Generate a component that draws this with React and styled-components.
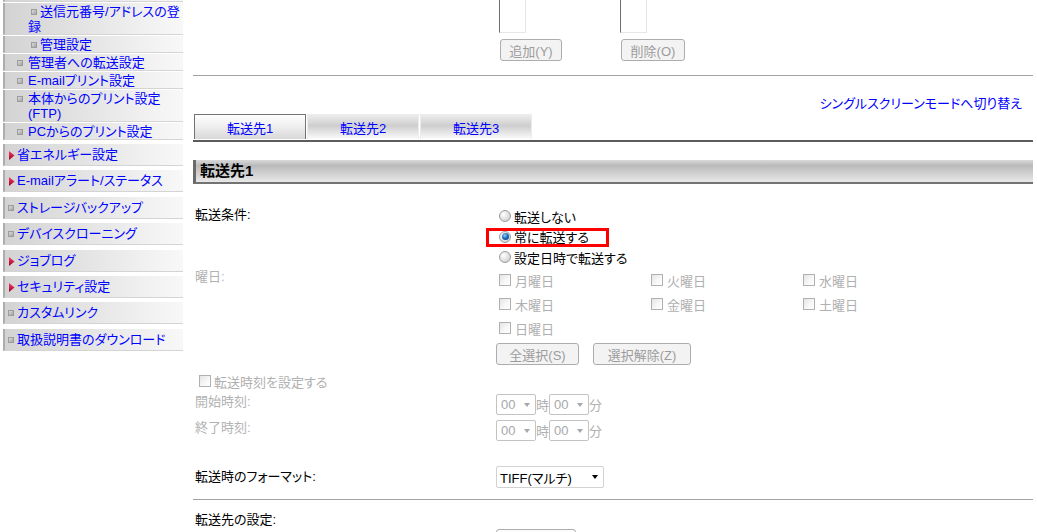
import React from 'react';
import styled, { createGlobalStyle, css } from 'styled-components';

const GlobalStyle = createGlobalStyle`
  html, body {
    margin: 0;
    padding: 0;
    overflow: hidden;
    background: #fff;
  }
  body {
    font-family: "Liberation Sans", "Noto Sans CJK JP", sans-serif;
    font-size: 13px;
    font-feature-settings: "palt";
    color: #000;
  }
  * {
    box-sizing: border-box;
  }
`;

const Page = styled.div`
  display: flex;
  align-items: flex-start;
  width: 1037px;
  height: 532px;
  overflow: hidden;
`;

/* ---------- side menu ---------- */

const Sidebar = styled.nav`
  flex: none;
  width: 183px;
  padding-left: 3px;
`;

// the page is scrolled: only the tail of the item above shows
const MenuList = styled.div`
  margin-top: -15px;
`;

const SubGroup = styled.div`
  padding-bottom: 3px;
`;

const MenuItem = styled.a`
  display: block;
  min-height: 17px;
  color: #0000ff;
  text-decoration: none;
  line-height: 15px;
  border-left: 2px solid #adadad;
  border-bottom: 1px solid #d4d4d4;
  background: linear-gradient(to right, #d3d3d3, #f1f1f1 80%, #f8f8f8);
  cursor: pointer;

  ${(p) => p.$level === 1 && css`
    padding: 3px 0 3px 3px;
    margin-bottom: 4.4px;
  `}
  ${(p) => p.$level === 2 && css`
    padding: 1px 0 0 23px;
    text-indent: -11px;
    margin-bottom: 1px;
  `}
  ${(p) => p.$level === 3 && css`
    padding: 1px 0 0 23px;
    text-indent: 3px;
    margin-bottom: 1px;
  `}
`;

const Bullet = styled.span`
  display: inline-block;
  width: 6px;
  height: 6px;
  margin-right: ${(p) => p.$gap}px;
  vertical-align: 1px;
  border: 1px solid #9c9c9c;
  background: linear-gradient(135deg, #dcdcdc, #a2a2a2);
`;

const ArrowIcon = styled.svg`
  display: inline-block;
  margin-right: 2px;
  vertical-align: -1px;
`;

const Arrow = () => (
  <ArrowIcon width="7" height="9" viewBox="0 0 7 9">
    <defs>
      <linearGradient id="menuArrow" x1="0" y1="0" x2="0" y2="1">
        <stop offset="0" stopColor="#ff3b6b" />
        <stop offset="1" stopColor="#9a0024" />
      </linearGradient>
    </defs>
    <polygon points="1,0 6.5,4.5 1,9" fill="url(#menuArrow)" />
  </ArrowIcon>
);

const subMenu = [
  { level: 3, label: <>送信元番号/アドレスの登<br />録</> },
  { level: 3, label: '管理設定' },
  { level: 2, label: '管理者への転送設定' },
  { level: 2, label: 'E-mailプリント設定' },
  { level: 2, label: <>本体からのプリント設定<br />(FTP)</> },
  { level: 2, label: 'PCからのプリント設定' },
];

const topMenu = [
  { label: '省エネルギー設定', folder: true },
  { label: 'E-mailアラート/ステータス', folder: true },
  { label: 'ストレージバックアップ' },
  { label: 'デバイスクローニング' },
  { label: 'ジョブログ', folder: true },
  { label: 'セキュリティ設定', folder: true },
  { label: 'カスタムリンク' },
  { label: '取扱説明書のダウンロード' },
];

/* ---------- main area ---------- */

const Main = styled.main`
  flex: none;
  width: 840px;
  margin-left: 10px;
`;

const FormRow = styled.div`
  display: flex;
  align-items: ${(p) => (p.$center ? 'center' : 'flex-start')};
  margin-top: ${(p) => p.$mt || 0}px;
  height: ${(p) => (p.$h ? `${p.$h}px` : 'auto')};
`;

const Label = styled.div`
  flex: none;
  width: 303px;
  padding-left: 2px;
  line-height: 18px;
  color: ${(p) => (p.$disabled ? '#b2b2b2' : '#000')};
`;

const Controls = styled.div`
  display: flex;
  align-items: ${(p) => p.$align || 'center'};
  gap: ${(p) => p.$gap || 0}px;
  padding-top: ${(p) => p.$pt || 0}px;
  padding-left: ${(p) => p.$pl || 0}px;
`;

const ListGroup = styled.div`
  width: 121px;
  display: flex;
  flex-direction: column;
  align-items: flex-start;
  gap: 6px;
`;

const ListBox = styled.div`
  width: 27px;
  height: 33px;
  border-left: 1px solid #6f6f6f;
  border-right: 1px solid #e6e6e6;
  border-bottom: 1px solid #e6e6e6;
`;

const Button = styled.button`
  display: inline-flex;
  align-items: center;
  justify-content: center;
  flex: none;
  width: ${(p) => p.$w}px;
  height: 22px;
  margin-left: ${(p) => p.$ml || 0}px;
  padding: 0;
  font: inherit;
  border: 1px solid #adadad;
  border-radius: 3px;
  background: ${(p) => (p.disabled ? '#f3f3f3' : 'linear-gradient(#fdfdfd, #e8e8e8)')};
  color: ${(p) => (p.disabled ? '#9c9c9c' : '#000')};
`;

const Divider = styled.hr`
  margin: ${(p) => p.$mt}px 0 0;
  border: 0;
  height: 1px;
  background: #a2a2a2;
`;

const LinkRow = styled.div`
  margin-top: 20px;
  padding-right: 11px;
  text-align: right;
  line-height: 16px;
`;

const Link = styled.a`
  color: #0000ff;
  text-decoration: none;
`;

const TabBar = styled.div`
  display: flex;
  gap: 1px;
  margin-top: 2px;
  padding: 0 0 1px 1px;
  border-bottom: 2px solid #5c5c5c;
`;

const Tab = styled.a`
  display: flex;
  align-items: center;
  justify-content: center;
  width: 112px;
  height: 25px;
  color: #0000ff;
  text-decoration: none;
  ${(p) => (p.$active
    ? css`
      border: 1px solid #727272;
      border-bottom: 0;
      background: linear-gradient(#fdfdfd, #f2f2f2 40%, #d8d8d8);
    `
    : css`
      border: 1px solid #ececec;
      border-bottom: 0;
      background: linear-gradient(#ececec, #cecece 45%, #fbfbfb);
    `)}
`;

const SectionHeader = styled.h2`
  margin: 18px 0 0;
  height: 24px;
  padding-left: 4px;
  border-left: 3px solid #6a6a6a;
  border-bottom: 2px solid #737373;
  background: linear-gradient(#d9d9d9, #bababa 25%, #e8e8e8);
  font-size: 15px;
  font-weight: bold;
  line-height: 22px;
`;

const OptionList = styled.div`
  display: flex;
  flex-direction: column;
  padding-left: 3px;
`;

const RadioRow = styled.label`
  position: relative;
  display: flex;
  align-items: center;
  gap: 3px;
  height: 20.5px;
`;

const Highlight = styled.span`
  position: absolute;
  left: -13px;
  top: 1px;
  width: 123px;
  height: 19px;
  border: 3px solid #ff0000;
`;

const Radio = styled.span`
  display: flex;
  align-items: center;
  justify-content: center;
  flex: none;
  width: 12px;
  height: 12px;
  border-radius: 50%;
  border: 1px solid #9d9d9d;
  background: radial-gradient(circle at 35% 35%, #ffffff, #d4d4d4 75%);

  &::after {
    content: '';
    display: ${(p) => (p.$checked ? 'block' : 'none')};
    width: 7px;
    height: 7px;
    border-radius: 50%;
    background: radial-gradient(circle at 40% 35%, #8fd0ff, #1667b8 50%, #083a73);
  }
`;

const DayGrid = styled.div`
  display: grid;
  grid-template-columns: repeat(3, 152px);
  grid-auto-rows: 24px;
  padding-left: 3px;
`;

const CheckItem = styled.label`
  display: flex;
  align-items: center;
  gap: ${(p) => p.$gap || 4}px;
  color: #b0b0b0;
`;

const Checkbox = styled.span`
  flex: none;
  width: 12px;
  height: 12px;
  border: 1px solid #b1b1b1;
  background: linear-gradient(135deg, #e4e4e4, #f8f8f8 60%, #ffffff);
`;

const ToggleRow = styled(CheckItem)`
  height: 20px;
  margin-top: 6px;
  padding-left: 6px;
`;

const Select = styled.div`
  display: flex;
  align-items: center;
  justify-content: space-between;
  flex: none;
  width: ${(p) => p.$w}px;
  height: ${(p) => p.$h || 21}px;
  padding: 0 5px 0 ${(p) => p.$pl || 4}px;
  border: 1px solid ${(p) => (p.$disabled ? '#c3c3c3' : '#d2d2d2')};
  border-radius: 2px;
  background: #fff;
  color: ${(p) => (p.$disabled ? '#a8a8a8' : '#000')};
`;

const Caret = styled.span`
  width: 0;
  height: 0;
  border-left: ${(p) => (p.$disabled ? 3 : 3.5)}px solid transparent;
  border-right: ${(p) => (p.$disabled ? 3 : 3.5)}px solid transparent;
  border-top: ${(p) => (p.$disabled ? '4px solid #a8a8a8' : '4px solid #000')};
`;

const Unit = styled.span`
  width: 13px;
  text-align: center;
  color: #b0b0b0;
`;

const days = ['月曜日', '火曜日', '水曜日', '木曜日', '金曜日', '土曜日', '日曜日'];

const TimeSelect = () => (
  <Controls $pt={1}>
    <Select $w={40} $disabled>00<Caret $disabled /></Select>
    <Unit>時</Unit>
    <Select $w={40} $disabled>00<Caret $disabled /></Select>
    <Unit>分</Unit>
  </Controls>
);

export default function App() {
  return (
    <>
      <GlobalStyle />
      <Page>
        <Sidebar>
          <MenuList>
            <SubGroup>
              <MenuItem $level={3} aria-hidden="true" />
              {subMenu.map((item, i) => (
                <MenuItem key={i} $level={item.level}>
                  <Bullet $gap={item.level === 2 ? 5 : 3} />
                  {item.label}
                </MenuItem>
              ))}
            </SubGroup>
            {topMenu.map((item) => (
              <MenuItem key={item.label} $level={1}>
                {item.folder ? <Arrow /> : <Bullet $gap={3} />}
                {item.label}
              </MenuItem>
            ))}
          </MenuList>
        </Sidebar>

        <Main>
          <FormRow>
            <Label />
            <Controls $align="flex-start" $pl={3}>
              <ListGroup>
                <ListBox />
                <Button $w={62} $ml={1} disabled>追加(Y)</Button>
              </ListGroup>
              <ListGroup>
                <ListBox />
                <Button $w={64} $ml={1} disabled>削除(O)</Button>
              </ListGroup>
            </Controls>
          </FormRow>

          <Divider $mt={14} />

          <LinkRow>
            <Link>シングルスクリーンモードへ切り替え</Link>
          </LinkRow>

          <TabBar>
            <Tab $active>転送先1</Tab>
            <Tab>転送先2</Tab>
            <Tab>転送先3</Tab>
          </TabBar>

          <SectionHeader>転送先1</SectionHeader>

          <FormRow $mt={22}>
            <Label>転送条件:</Label>
            <OptionList>
              <RadioRow><Radio />転送しない</RadioRow>
              <RadioRow>
                <Highlight />
                <Radio $checked />常に転送する
              </RadioRow>
              <RadioRow><Radio />設定日時で転送する</RadioRow>
            </OptionList>
          </FormRow>

          <FormRow $mt={0.5}>
            <Label $disabled>曜日:</Label>
            <DayGrid>
              {days.map((d) => (
                <CheckItem key={d}>
                  <Checkbox />
                  {d}
                </CheckItem>
              ))}
            </DayGrid>
          </FormRow>

          <FormRow $mt={3}>
            <Label />
            <Controls $gap={14}>
              <Button $w={83} disabled>全選択(S)</Button>
              <Button $w={98} disabled>選択解除(Z)</Button>
            </Controls>
          </FormRow>

          <ToggleRow $gap={3}>
            <Checkbox />
            転送時刻を設定する
          </ToggleRow>

          <FormRow $mt={2} $h={26}>
            <Label $disabled>開始時刻:</Label>
            <TimeSelect />
          </FormRow>
          <FormRow $h={26}>
            <Label $disabled>終了時刻:</Label>
            <TimeSelect />
          </FormRow>

          <FormRow $mt={20} $h={24} $center>
            <Label>転送時のフォーマット:</Label>
            <Select $w={108} $h={22} $pl={3}>
              TIFF(マルチ)
              <Caret />
            </Select>
          </FormRow>

          <Divider $mt={10} />

          <FormRow $mt={11}>
            <Label>転送先の設定:</Label>
            <Controls $pt={18}>
              {/* lies below the fold; only its top edge shows */}
              <Button $w={80} aria-label="転送先の設定" />
            </Controls>
          </FormRow>
        </Main>
      </Page>
    </>
  );
}
